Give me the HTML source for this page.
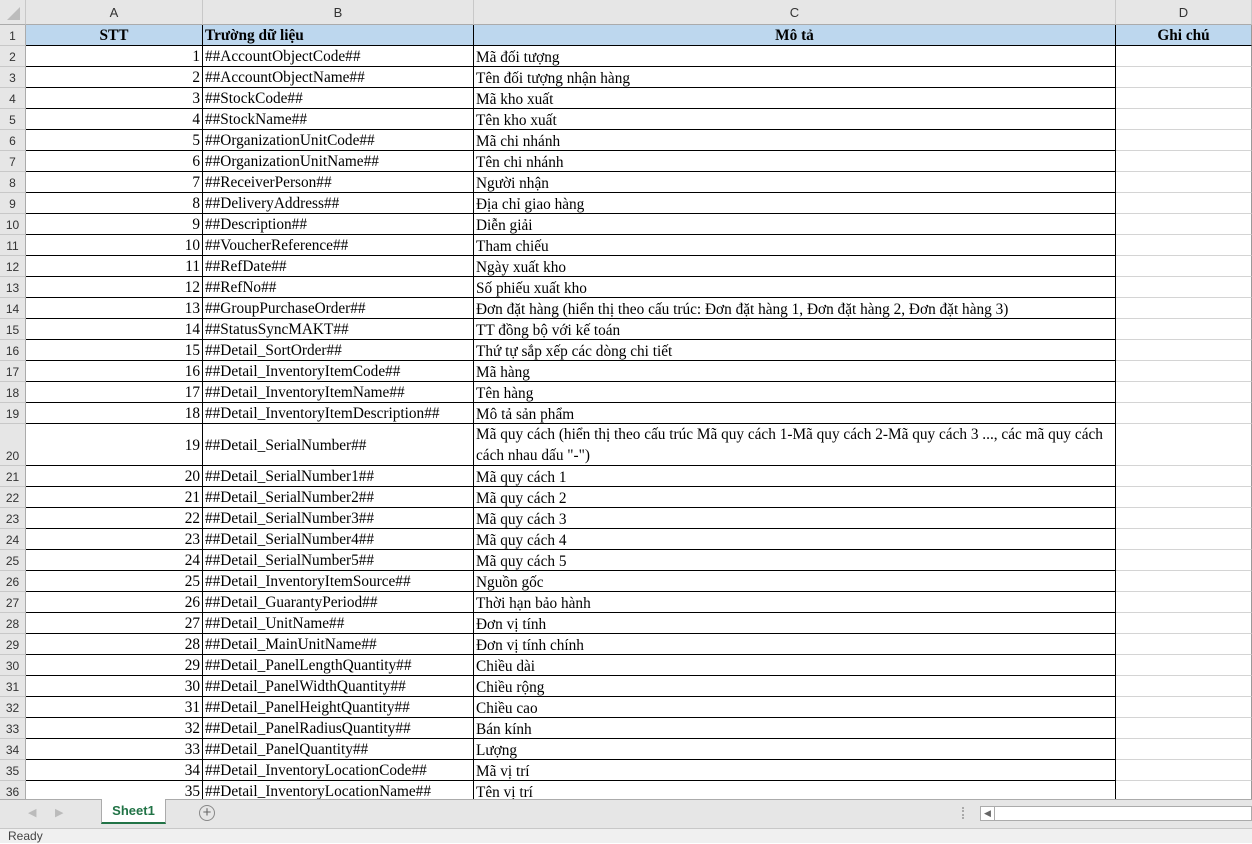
<!DOCTYPE html><html><head><meta charset="utf-8"><style>
body{margin:0;width:1252px;height:843px;overflow:hidden;background:#fff;position:relative;font-family:"Liberation Serif",serif;font-size:15.3px}
.a{position:absolute;box-sizing:border-box}
.ch{position:absolute;top:0;height:25px;background:#e6e6e6;border-right:1px solid #c8c8c8;border-bottom:1px solid #ababab;font:13px "Liberation Sans",sans-serif;color:#333;text-align:center;line-height:25px;box-sizing:border-box}
.rh{position:absolute;left:0;width:26px;background:#e6e6e6;border-right:1px solid #ababab;border-bottom:1px solid #c8c8c8;font:12px "Liberation Sans",sans-serif;color:#333;text-align:center;box-sizing:border-box;display:flex;align-items:flex-end;justify-content:center;padding-bottom:2px}
.c{position:absolute;box-sizing:border-box;border-right:1px solid #000;border-bottom:1px solid #000;white-space:nowrap;overflow:hidden;display:flex;align-items:center;padding:2px 2px 0;color:#000}
.n{justify-content:flex-end}
.d{border-right:1px solid #d4d4d4;border-bottom:1px solid #d4d4d4}
</style></head><body>
<div class="ch" style="left:0;width:26px"><svg width="26" height="25"><polygon points="20,7 20,20 7,20" fill="#bcbcbc"/></svg></div>
<div class="ch" style="left:26px;width:177px">A</div>
<div class="ch" style="left:203px;width:271px">B</div>
<div class="ch" style="left:474px;width:642px">C</div>
<div class="ch" style="left:1116px;width:136px">D</div>
<div id="g"></div>
<script>
var rows=[["STT","Trường dữ liệu","Mô tả","Ghi chú"],
["1","##AccountObjectCode##","Mã đối tượng"],
["2","##AccountObjectName##","Tên đối tượng nhận hàng"],
["3","##StockCode##","Mã kho xuất"],
["4","##StockName##","Tên kho xuất"],
["5","##OrganizationUnitCode##","Mã chi nhánh"],
["6","##OrganizationUnitName##","Tên chi nhánh"],
["7","##ReceiverPerson##","Người nhận"],
["8","##DeliveryAddress##","Địa chỉ giao hàng"],
["9","##Description##","Diễn giải"],
["10","##VoucherReference##","Tham chiếu"],
["11","##RefDate##","Ngày xuất kho"],
["12","##RefNo##","Số phiếu xuất kho"],
["13","##GroupPurchaseOrder##","Đơn đặt hàng (hiển thị theo cấu trúc: Đơn đặt hàng 1, Đơn đặt hàng 2, Đơn đặt hàng 3)"],
["14","##StatusSyncMAKT##","TT đồng bộ với kế toán"],
["15","##Detail_SortOrder##","Thứ tự sắp xếp các dòng chi tiết"],
["16","##Detail_InventoryItemCode##","Mã hàng"],
["17","##Detail_InventoryItemName##","Tên hàng"],
["18","##Detail_InventoryItemDescription##","Mô tả sản phẩm"],
["19","##Detail_SerialNumber##","Mã quy cách (hiển thị theo cấu trúc Mã quy cách 1-Mã quy cách 2-Mã quy cách 3 ..., các mã quy cách<br>cách nhau dấu \"-\")"],
["20","##Detail_SerialNumber1##","Mã quy cách 1"],
["21","##Detail_SerialNumber2##","Mã quy cách 2"],
["22","##Detail_SerialNumber3##","Mã quy cách 3"],
["23","##Detail_SerialNumber4##","Mã quy cách 4"],
["24","##Detail_SerialNumber5##","Mã quy cách 5"],
["25","##Detail_InventoryItemSource##","Nguồn gốc"],
["26","##Detail_GuarantyPeriod##","Thời hạn bảo hành"],
["27","##Detail_UnitName##","Đơn vị tính"],
["28","##Detail_MainUnitName##","Đơn vị tính chính"],
["29","##Detail_PanelLengthQuantity##","Chiều dài"],
["30","##Detail_PanelWidthQuantity##","Chiều rộng"],
["31","##Detail_PanelHeightQuantity##","Chiều cao"],
["32","##Detail_PanelRadiusQuantity##","Bán kính"],
["33","##Detail_PanelQuantity##","Lượng"],
["34","##Detail_InventoryLocationCode##","Mã vị trí"],
["35","##Detail_InventoryLocationName##","Tên vị trí"]];
var h="",y=25;
for(var i=0;i<rows.length;i++){var r=rows[i],ht=(i==19)?42:21;
h+='<div class="rh" style="top:'+y+'px;height:'+ht+'px">'+(i+1)+'</div>';
if(i==0){var s='background:#bdd7ee;font-weight:bold;justify-content:';
h+='<div class="c" style="'+s+'center;left:26px;top:'+y+'px;width:177px;height:21px">STT</div>';
h+='<div class="c" style="'+s+'flex-start;left:203px;top:'+y+'px;width:271px;height:21px">Trường dữ liệu</div>';
h+='<div class="c" style="'+s+'center;left:474px;top:'+y+'px;width:642px;height:21px">Mô tả</div>';
h+='<div class="c" style="'+s+'center;left:1116px;top:'+y+'px;width:136px;height:21px;border-right:1px solid #999">Ghi chú</div>';}
else{h+='<div class="c n" style="left:26px;top:'+y+'px;width:177px;height:'+ht+'px">'+r[0]+'</div>';
h+='<div class="c" style="left:203px;top:'+y+'px;width:271px;height:'+ht+'px">'+r[1]+'</div>';
h+='<div class="c" style="left:474px;top:'+y+'px;width:642px;height:'+ht+'px;line-height:21px;padding-top:'+(i==19?0:2)+'px">'+(i==19?'<div>'+r[2]+'</div>':r[2])+'</div>';
h+='<div class="c d" style="left:1116px;top:'+y+'px;width:136px;height:'+ht+'px;border-right:1px solid #999"></div>';}
y+=ht;}
document.getElementById('g').innerHTML=h;
</script>
<div class="a" style="left:0;top:799px;width:1252px;height:29px;background:#e6e6e6;border-top:1px solid #ababab"></div>
<div class="a" style="left:28px;top:806px;font:11px 'Liberation Sans',sans-serif;color:#bbb">◀</div>
<div class="a" style="left:55px;top:806px;font:11px 'Liberation Sans',sans-serif;color:#bbb">▶</div>
<div class="a" style="left:101px;top:799px;width:65px;height:25px;background:#fff;border-left:1px solid #ababab;border-right:1px solid #ababab;border-bottom:2px solid #217346;font:bold 13px 'Liberation Sans',sans-serif;color:#217346;text-align:center;line-height:24px">Sheet1</div>
<div class="a" style="left:199px;top:805px;width:16px;height:16px;border:1px solid #888;border-radius:50%;font:15px/14px 'Liberation Sans',sans-serif;color:#666;text-align:center">+</div>
<div class="a" style="left:962px;top:807px;width:2px;height:12px;border-left:2px dotted #aaa"></div>
<div class="a" style="left:980px;top:806px;width:272px;height:15px;background:#fff;border:1px solid #ababab"></div>
<div class="a" style="left:994px;top:806px;width:1px;height:15px;background:#ababab"></div>
<div class="a" style="left:984px;top:808px;font:9px 'Liberation Sans',sans-serif;color:#666">◀</div>
<div class="a" style="left:0;top:828px;width:1252px;height:15px;background:#f0f0f0;border-top:1px solid #c8c8c8;font:12px 'Liberation Sans',sans-serif;color:#444;padding-left:8px;line-height:15px">Ready</div>
</body></html>
